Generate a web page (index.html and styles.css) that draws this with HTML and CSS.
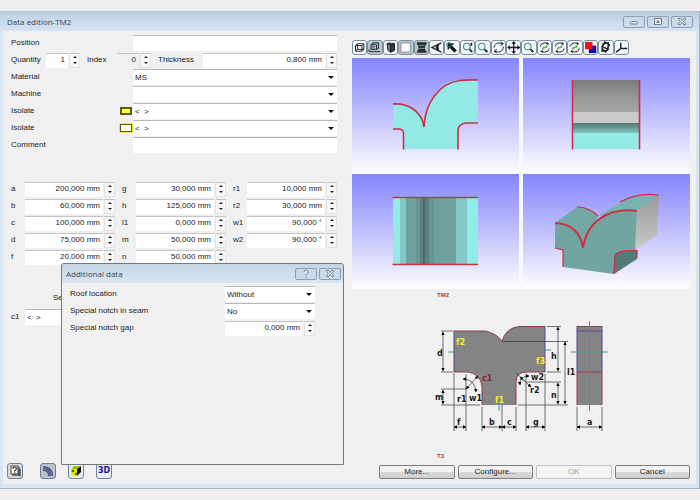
FILE: index.html
```
<!DOCTYPE html>
<html lang="en">
<head>
    <meta charset="UTF-8">
    <meta name="viewport" content="width=device-width, initial-scale=1.0">
    <title>Data edition-TM2</title>
    <link rel="stylesheet" href="styles.css">
</head>
<body>
    <div class="window">
        <div class="titlebar">
            <h1>Data edition-TM2</h1>
            <div class="title-buttons">
                <button aria-label="Minimize"><svg viewBox="0 0 20 10"><rect x="6.500" y="4.500" width="7" height="2.500" rx="1"/></svg></button>
                <button aria-label="Maximize"><svg viewBox="0 0 20 10"><rect x="6.500" y="1.500" width="7" height="6"/><rect x="9" y="4" width="2" height="1.500"/></svg></button>
                <button aria-label="Close"><svg viewBox="0 0 20 10"><path d="M6.500 1.500h2l1.500 2 1.500-2h2v1l-2 2 2 2v1h-2l-1.500-2-1.500 2h-2v-1l2-2-2-2z"/></svg></button>
            </div>
        </div>

        <div class="client">
            <!-- Form side -->
            <div class="form-panel">
                <div class="fields">
                    <div class="row">
                        <label class="name" for="position">Position</label>
                        <input class="text" type="text" id="position">
                    </div>
                    <div class="row">
                        <label class="short" for="quantity">Quantity</label>
                        <div class="spin small"><input type="text" id="quantity" value="1"><span class="arrows"><button class="up" aria-label="Up"></button><button class="down" aria-label="Down"></button></span></div>
                        <label class="index" for="index">Index</label>
                        <div class="spin small gray"><input type="text" id="index" value="0"><span class="arrows"><button class="up" aria-label="Up"></button><button class="down" aria-label="Down"></button></span></div>
                        <label class="thickness" for="thickness">Thickness</label>
                        <div class="spin"><input type="text" id="thickness" value="0,800 mm"><span class="arrows"><button class="up" aria-label="Up"></button><button class="down" aria-label="Down"></button></span></div>
                    </div>
                    <div class="row">
                        <label class="name" for="material">Material</label>
                        <div class="select"><select id="material"><option>MS</option></select></div>
                    </div>
                    <div class="row">
                        <label class="name" for="machine">Machine</label>
                        <div class="select"><select id="machine"><option></option></select></div>
                    </div>
                    <div class="row">
                        <label class="name" for="isolate1">Isolate <span class="swatch"></span></label>
                        <div class="select"><select id="isolate1"><option>&lt;&nbsp; &gt;</option></select></div>
                    </div>
                    <div class="row">
                        <label class="name" for="isolate2">Isolate <span class="swatch outer"></span></label>
                        <div class="select"><select id="isolate2"><option>&lt;&nbsp; &gt;</option></select></div>
                    </div>
                    <div class="row">
                        <label class="name" for="comment">Comment</label>
                        <input class="text" type="text" id="comment">
                    </div>
                </div>

                <!-- Dimensions -->
                <div class="dimensions">
                    <div class="column">
                        <div class="row"><label for="a">a</label><div class="spin"><input type="text" id="a" value="200,000 mm"><span class="arrows"><button class="up" aria-label="Up"></button><button class="down" aria-label="Down"></button></span></div></div>
                        <div class="row"><label for="b">b</label><div class="spin"><input type="text" id="b" value="60,000 mm"><span class="arrows"><button class="up" aria-label="Up"></button><button class="down" aria-label="Down"></button></span></div></div>
                        <div class="row"><label for="c">c</label><div class="spin"><input type="text" id="c" value="100,000 mm"><span class="arrows"><button class="up" aria-label="Up"></button><button class="down" aria-label="Down"></button></span></div></div>
                        <div class="row"><label for="d">d</label><div class="spin"><input type="text" id="d" value="75,000 mm"><span class="arrows"><button class="up" aria-label="Up"></button><button class="down" aria-label="Down"></button></span></div></div>
                        <div class="row"><label for="f">f</label><div class="spin"><input type="text" id="f" value="20,000 mm"><span class="arrows"><button class="up" aria-label="Up"></button><button class="down" aria-label="Down"></button></span></div></div>
                    </div>
                    <div class="column">
                        <div class="row"><label for="g">g</label><div class="spin"><input type="text" id="g" value="30,000 mm"><span class="arrows"><button class="up" aria-label="Up"></button><button class="down" aria-label="Down"></button></span></div></div>
                        <div class="row"><label for="h">h</label><div class="spin"><input type="text" id="h" value="125,000 mm"><span class="arrows"><button class="up" aria-label="Up"></button><button class="down" aria-label="Down"></button></span></div></div>
                        <div class="row"><label for="l1">l1</label><div class="spin"><input type="text" id="l1" value="0,000 mm"><span class="arrows"><button class="up" aria-label="Up"></button><button class="down" aria-label="Down"></button></span></div></div>
                        <div class="row"><label for="m">m</label><div class="spin"><input type="text" id="m" value="50,000 mm"><span class="arrows"><button class="up" aria-label="Up"></button><button class="down" aria-label="Down"></button></span></div></div>
                        <div class="row"><label for="n">n</label><div class="spin"><input type="text" id="n" value="50,000 mm"><span class="arrows"><button class="up" aria-label="Up"></button><button class="down" aria-label="Down"></button></span></div></div>
                    </div>
                    <div class="column">
                        <div class="row"><label for="r1">r1</label><div class="spin"><input type="text" id="r1" value="10,000 mm"><span class="arrows"><button class="up" aria-label="Up"></button><button class="down" aria-label="Down"></button></span></div></div>
                        <div class="row"><label for="r2">r2</label><div class="spin"><input type="text" id="r2" value="30,000 mm"><span class="arrows"><button class="up" aria-label="Up"></button><button class="down" aria-label="Down"></button></span></div></div>
                        <div class="row"><label for="w1">w1</label><div class="spin"><input type="text" id="w1" value="90,000 °"><span class="arrows"><button class="up" aria-label="Up"></button><button class="down" aria-label="Down"></button></span></div></div>
                        <div class="row"><label for="w2">w2</label><div class="spin"><input type="text" id="w2" value="90,000 °"><span class="arrows"><button class="up" aria-label="Up"></button><button class="down" aria-label="Down"></button></span></div></div>
                    </div>
                </div>

                <div class="seam">
                    <div class="seam-title">Se</div>
                    <div class="row">
                        <label for="c1">c1</label>
                        <input class="text" type="text" id="c1" value="&lt;&nbsp; &gt;">
                    </div>
                </div>

                <div class="mode-buttons">
                    <button class="help" aria-label="Help"><svg viewBox="0 0 14 14"><path d="M3 2h7v8H3z" fill="#fffde8" stroke="#444"/><path d="M11 3v8l1 1V5M4 11h7" fill="none" stroke="#222"/><path d="M5 5q0-2 1.700-2T8.300 4.700Q8.300 6 6.700 6.500v1M6.700 8.300v1" fill="none" stroke="#333" stroke-width="1.200"/></svg></button>
                    <button class="elbow" aria-label="Elbow"><svg viewBox="0 0 14 14"><path d="M2 2q10 0 10 10H7Q7 7 2 7z" fill="#4d4d7c"/><path d="M2 3.700q8.300 0 8.500 8M2 5.400q6.500 0 6.700 6.300" fill="none" stroke="#9494b5" stroke-width=".6"/></svg></button>
                    <button aria-label="Solid view"><svg viewBox="0 0 14 14"><path d="M2 5h6v7H2z" fill="#f2f000"/><path d="M2 5l3-3h7L8 5z" fill="#b2c800"/><path d="M8 5l4-3v6l-4 4z" fill="#111"/><path d="M3 6h2v2H3zM6 9h2v2H6zM5 4l3-1" fill="#3e7a22" stroke="#3e7a22" stroke-width=".5"/></svg></button>
                    <button class="three-d">3D</button>
                </div>

                <!-- Additional data dialog -->
                <div class="dialog">
                    <div class="dialog-title">
                        <h2>Additional data</h2>
                        <div class="title-buttons">
                            <button aria-label="Help"><svg viewBox="0 0 20 10"><path d="M8 3q0-2 2-2t2 2q0 1-1 1.500l-1 1V7M10 8v1"/></svg></button>
                            <button aria-label="Close"><svg viewBox="0 0 20 10"><path d="M6.500 1.500h2l1.500 2 1.500-2h2v1l-2 2 2 2v1h-2l-1.500-2-1.500 2h-2v-1l2-2-2-2z"/></svg></button>
                        </div>
                    </div>
                    <div class="dialog-body">
                        <div class="row">
                            <label for="roof">Roof location</label>
                            <div class="select"><select id="roof"><option>Without</option></select></div>
                        </div>
                        <div class="row">
                            <label for="notch">Special notch in seam</label>
                            <div class="select"><select id="notch"><option>No</option></select></div>
                        </div>
                        <div class="row">
                            <label for="gap">Special notch gap</label>
                            <div class="spin"><input type="text" id="gap" value="0,000 mm"><span class="arrows"><button class="up" aria-label="Up"></button><button class="down" aria-label="Down"></button></span></div>
                        </div>
                    </div>
                </div>
            </div>

            <!-- Drawing side -->
            <div class="view-panel">
                <div class="toolbar">
                    <button aria-label="Wireframe"><svg viewBox="0 0 14 14"><path d="M2.500 5h7v6h-7zM4.500 3h7v6h-7zM2.500 5l2-2M9.500 5l2-2M2.500 11l2-2M9.500 11l2-2"/></svg></button>
                    <button class="on" aria-label="Hidden lines"><svg viewBox="0 0 14 14"><path d="M3 4h6v5H3zM4 4l1-2h6v6L9 9M1 11.500h12M1 9v2.500"/><path d="M4 6h3M4 7.500h3" stroke="#555"/></svg></button>
                    <button aria-label="Shaded"><svg viewBox="0 0 14 14"><path d="M3 3l2-1 6 1v7l-4 2-3-2z" fill="#6f7f7f"/><path d="M3 3l4 1v8M7 4l4-1" /><path d="M7 4l4-1v7l-4 2z" fill="#34413f"/></svg></button>
                    <button class="on" aria-label="Single view"><svg viewBox="0 0 14 14"><path d="M2 2h10v10H2z" fill="#fff" stroke="#888"/></svg></button>
                    <button class="on" aria-label="Unfold"><svg viewBox="0 0 14 14"><path d="M2 2h10L10 6H4zM4 6h6v3H4zM2 12l2-3h6l2 3z" fill="#333"/><path d="M4 5h6M4 8h6" stroke="#75aaaa"/></svg></button>
                    <button aria-label="Eye"><svg viewBox="0 0 14 14"><path d="M12 2L2 7l10 5M9 4q-2 3 0 6" stroke-width="1.500"/><path d="M8 4Q5 7 8 10z" fill="#111"/></svg></button>
                    <button aria-label="Select"><svg viewBox="0 0 14 14"><path d="M3 3h6L7 5l5 5-2 2-5-5-2 2z" fill="#111"/><circle cx="4" cy="4" r="2.500" stroke="#398b88"/></svg></button>
                    <button aria-label="Zoom in"><svg viewBox="0 0 14 14"><circle cx="6" cy="6" r="3.700" fill="#e3f7f3" stroke="#2e6f6b"/><path d="M9 9l3 3M11 2v3" stroke-width="1.800"/></svg></button>
                    <button aria-label="Zoom out"><svg viewBox="0 0 14 14"><circle cx="6" cy="6" r="3.700" fill="#e3f7f3" stroke="#2e6f6b"/><path d="M9 9l3 3" stroke-width="2"/></svg></button>
                    <button aria-label="Rotate"><svg viewBox="0 0 14 14"><path d="M2 7q0-4 5-5l4 1M12 6q0 5-5 6l-4-1M9 1l3 2-3 2M5 9l-3 2 3 2"/></svg></button>
                    <button aria-label="Pan"><svg viewBox="0 0 14 14"><path d="M7 2v10M2 7h10" stroke-width="1.400"/><path d="M7 0l2.500 3h-5zM7 14l2.500-3h-5zM0 7l3-2.500v5zM14 7l-3-2.500v5z" fill="#111" stroke="none"/></svg></button>
                    <button aria-label="Zoom window"><svg viewBox="0 0 14 14"><circle cx="6" cy="6" r="3.700" fill="#e3f7f3" stroke="#2e6f6b"/><path d="M9 9l3 3" stroke-width="2"/></svg></button>
                    <button aria-label="Rotate X"><svg viewBox="0 0 14 14"><path d="M2 6q1-4 5-4l4 1M12 8q-1 4-5 4l-4-1M9 1l2 2-2 2M5 9l-2 2 2 2"/><path d="M4 8l6-2" stroke="#53b545" stroke-width="1.600"/></svg></button>
                    <button aria-label="Rotate Y"><svg viewBox="0 0 14 14"><path d="M2 6q1-4 5-4l4 1M12 8q-1 4-5 4l-4-1M9 1l2 2-2 2M5 9l-2 2 2 2"/><path d="M4 8l6-2" stroke="#53b545" stroke-width="1.600"/></svg></button>
                    <button aria-label="Rotate Z"><svg viewBox="0 0 14 14"><path d="M2 6q1-4 5-4l4 1M12 8q-1 4-5 4l-4-1M9 1l2 2-2 2M5 9l-2 2 2 2"/><path d="M4 8l6-2" stroke="#53b545" stroke-width="1.600"/></svg></button>
                    <button aria-label="Colors"><svg viewBox="0 0 14 14"><path d="M5 5h8v8H5z" fill="#0710b5" stroke="none"/><path d="M1 1h8v8H1z" fill="#ee1118" stroke="none"/></svg></button>
                    <button aria-label="Mesh"><svg viewBox="0 0 14 14"><path d="M4 3l6-1-1 8-6 1zM2 6l9 3M6 1l5 3-4 8-4-4z" stroke-width="1.400"/></svg></button>
                    <button aria-label="Axes"><svg viewBox="0 0 14 14"><path d="M6 2v6l-5 4M6 8h7" stroke-width="1.500"/></svg></button>
                </div>

                <div class="views">
                    <!-- front -->
                    <svg class="view" viewBox="0 0 167 115">
                        <path fill="#93e9e5" d="M41 46C57 45 70 54 72 69C73 45 87 22 108 22H126V65H114Q106 65 106 73V91H51V75Q51 71 47 71H41z"/>
                        <path class="edge" d="M41 46C57 45 70 54 72 69C73 45 87 25 108 22.500Q116 21.500 126 22M126 65H114Q106 66 106 73V91.500M51.500 91.500V75Q51 71 47 71H41"/>
                    </svg>
                    <!-- side -->
                    <svg class="view" viewBox="0 0 167 115">
                        <defs>
                            <linearGradient id="side-top" x1="0" y1="0" x2="0" y2="1"><stop offset="0" stop-color="#7b7b7b"/><stop offset=".5" stop-color="#969696"/><stop offset="1" stop-color="#a6a6a6"/></linearGradient>
                            <linearGradient id="side-low" x1="0" y1="0" x2="0" y2="1"><stop offset="0" stop-color="#537674"/><stop offset="1" stop-color="#83c5c2"/></linearGradient>
                        </defs>
                        <path fill="url(#side-top)" d="M50 22h67v32H50z"/>
                        <path fill="#cacaca" d="M50 54h67v11H50z"/>
                        <path fill="url(#side-low)" d="M50 65h67v10H50z"/>
                        <path fill="#93e9e5" d="M50 75h67v16H50z"/>
                        <path class="edge" d="M49.500 22v69.500M116.500 22v69.500"/>
                    </svg>
                    <!-- top -->
                    <svg class="view" viewBox="0 0 167 115">
                        <path fill="#91ebe6" d="M41 23h85v67H41z"/>
                        <path fill="#84c9c8" d="M48 23h67v67H48z"/>
                        <path fill="#6f9f9f" d="M54 23h50v67H54z"/>
                        <path fill="#689494" d="M64 23h18v67H64z"/>
                        <path fill="#5c8080" d="M68 23h9v67h-9z"/>
                        <path fill="#4b6868" d="M71 23h2v67h-2z"/>
                        <path class="edge" d="M40.500 23.500H126M40.500 90.500H126"/>
                    </svg>
                    <!-- isometric -->
                    <svg class="view" viewBox="0 0 167 115">
                        <defs>
                            <linearGradient id="iso-side" x1="0" y1="0" x2="0" y2="1"><stop offset="0" stop-color="#9b9b9b"/><stop offset="1" stop-color="#c9c9c9"/></linearGradient>
                        </defs>
                        <path fill="#72a8a6" d="M32 49L54 33Q66 33 75 42L60 74z"/>
                        <path fill="#78b3b0" d="M75 42L98 28Q116 19 136 21L114 37z"/>
                        <path fill="url(#iso-side)" d="M114 37L136 21 134 61 112 76z"/>
                        <path fill="#557a77" d="M92 83Q94 78 100 77L114 76V85L91 100z"/>
                        <path fill="#71a5a2" d="M32 49Q56 50 60 74C64 47 86 33 114 37L112 76H100Q92 77 92 83L91 100 40 93V76L32 74z"/>
                        <path class="edge thick" d="M32 49Q56 50 60 74C64 47 86 33 114 37"/>
                        <path class="edge thin" d="M54 33Q66 33 75 42M97 28Q115 18 136 21M32 74L40 76V93M114 76V84"/>
                        <path class="edge" d="M114 76.500L100 77Q92 78 92 84L91 100"/>
                    </svg>
                </div>

                <!-- dimension drawing -->
                <svg class="drawing" viewBox="0 0 338 174">
                    <defs>
                        <marker id="arrow" viewBox="0 0 6 6" refX="5.500" refY="3" markerWidth="5" markerHeight="5" orient="auto-start-reverse"><path d="M0 0L6 3 0 6z"/></marker>
                    </defs>
                    <text class="code" x="85" y="8">TM2</text>
                    <text class="code" x="85" y="169">T3</text>
                    <path fill="#848484" d="M102 42H133Q144 44 150 52Q154 39 167 37.500H193V83H175Q164 83 164 93V116H130V97Q128 84 115 83H102z"/>
                    <path class="cut" d="M102 42H133Q144 44 150 52Q154 39 167 37.500H193M193 83H175Q164 83 164 93V116M130 116V97Q128 84 115 83H102"/>
                    <path class="cut blue" d="M102 42V83M193 37.500V83"/>
                    <path fill="#848484" d="M225 37h25v79h-25z"/>
                    <path class="cut" d="M225 83V116M250 83V116M225 37.500h25M225 83h25"/>
                    <path class="cut blue" d="M225 37V83M250 37V83M225 42h25"/>
                    <path class="axis" d="M96 63h6M193 61h6M219 63h37M237.500 32v90M147 116v6"/>
                    <!-- extension lines -->
                    <path class="line" d="M89 42h12M89 83h12M89 100h25M89 116h39M102 84v58M114 85v57M130 118v24M150 116v26M164 118v24M174 85v57M193 85v57M195 37.500h14M150 52.500h66M195 83h14M175 93h34M166 116h50M225 118v24M250 118v24M164 84l10 9"/>
                    <!-- dimension lines -->
                    <path class="line dim" d="M91 43V82"/>
                    <path class="line dim" d="M91 101V115"/>
                    <path class="line dim" d="M206 38V82"/>
                    <path class="line dim" d="M206 94V115"/>
                    <path class="line dim" d="M213 53V115"/>
                    <path class="line dim" d="M102 138H114"/>
                    <path class="line dim" d="M130 138H150"/>
                    <path class="line dim" d="M150 138H164"/>
                    <path class="line dim" d="M174 138H193"/>
                    <path class="line dim" d="M225 138H250"/>
                    <path class="line dim" d="M111 90Q123 90 124 103"/>
                    <path class="line dim" d="M114 100L126 87"/>
                    <path class="line dim" d="M168 96Q167 87 177 87"/>
                    <path class="line dim" d="M179 98L168 88"/>
                    <g class="labels">
                        <text x="85" y="67">d</text>
                        <text x="83" y="111">m</text>
                        <text x="105" y="113">r1</text>
                        <text x="117" y="112">w1</text>
                        <text x="105" y="136">f</text>
                        <text x="137" y="136">b</text>
                        <text x="155" y="136">c</text>
                        <text x="181" y="136">g</text>
                        <text x="235" y="136">a</text>
                        <text x="199" y="70">h</text>
                        <text x="215" y="86">l1</text>
                        <text x="199" y="109">n</text>
                        <text x="179" y="91">w2</text>
                        <text x="178" y="104">r2</text>
                        <text class="red" x="130" y="92">c1</text>
                        <text class="yellow" x="104" y="56">f2</text>
                        <text class="yellow" x="184" y="75">f3</text>
                        <text class="yellow" x="143" y="114">f1</text>
                    </g>
                </svg>

                <div class="actions">
                    <button>More...</button>
                    <button>Configure...</button>
                    <button disabled>OK</button>
                    <button>Cancel</button>
                </div>
            </div>
        </div>
    </div>
</body>
</html>
```
FILE: styles.css
```
* {
    margin: 0;
    padding: 0;
    box-sizing: border-box;
}

body {
    font-family: "Liberation Sans", Arial, sans-serif;
    font-size: 8px;
    line-height: 10px;
    color: #222;
    background-color: #f1efee;
    min-height: 100vh;
    padding: 11px 0;
    display: flex;
}

input,
select,
button {
    font: inherit;
    color: inherit;
    border: none;
    border-radius: 0;
    background: none;
    outline: none;
}

button {
    cursor: pointer;
}

.window {
    flex: 1;
    display: flex;
    flex-direction: column;
    background-color: #d9e7f3;
    border-top: 1px solid #b3c3d3;
    border-bottom: 1px solid #a5b5c3;
    border-right: 1px solid #9cacbc;
    padding: 0 3px 4px;
}

/* Title bars */
.titlebar {
    height: 19px;
    margin: 0 -3px;
    padding: 0 6px 0 7px;
    display: flex;
    align-items: center;
    justify-content: space-between;
    background: linear-gradient(#bccfe1, #d6e4f3);
}

h1,
h2 {
    font-family: "Open Sans", sans-serif;
    font-size: 8px;
    font-weight: normal;
    color: #3c4650;
}

.title-buttons {
    display: flex;
    gap: 2px;
}

.title-buttons button {
    width: 22px;
    height: 12px;
    border: 1px solid #8fa0b4;
    border-radius: 2px;
    background-color: #cbdaea;
}

.title-buttons svg {
    display: block;
    width: 20px;
    height: 10px;
    fill: #e8eef5;
    stroke: #5a6878;
    stroke-width: 0.8;
}

.client {
    flex: 1;
    display: grid;
    grid-template-columns: minmax(0, 349fr) minmax(0, 344fr);
    background-color: #f0f0f0;
}

/* Form side */
.form-panel {
    position: relative;
    display: flex;
    flex-direction: column;
    padding: 4px 15px 5px 4px;
}

.fields,
.dimensions,
.seam {
    padding-left: 4px;
}

.fields,
.column {
    display: flex;
    flex-direction: column;
    gap: 1px;
}

.row {
    display: flex;
    align-items: center;
    height: 16px;
}

.row label {
    flex-shrink: 0;
}

.name {
    width: 122px;
    padding-right: 1px;
    display: flex;
    align-items: center;
    justify-content: space-between;
}

.short {
    width: 35px;
}

.index {
    width: 37px;
    padding-left: 7px;
}

.thickness {
    width: 52px;
    padding-left: 7px;
}

.text {
    flex: 1;
    min-width: 0;
    height: 16px;
    padding: 0 2px;
    background-color: #fff;
    border-top: 1px solid #b9b9b9;
}

.swatch {
    width: 12px;
    height: 8px;
    border: 2px solid #5e5a1c;
    background-color: #ffff3c;
}

.swatch.outer {
    border-width: 1px;
    outline: 1px solid #eeee20;
    background-color: #fffff0;
}

/* Number box with up and down arrows */
.spin {
    flex: 1;
    min-width: 0;
    height: 15px;
    display: flex;
    gap: 1px;
}

.spin.small {
    flex: none;
    width: 34px;
}

.spin input {
    flex: 1;
    min-width: 0;
    padding-right: 3px;
    padding-bottom: 2px;
    text-align: right;
    background-color: #fff;
    border-top: 1px solid #c4c4c4;
}

.spin.gray input {
    background-color: #f0f0f0;
}

.arrows {
    width: 11px;
    display: flex;
    flex-direction: column;
    background-color: #f7f7f7;
    border: 1px solid #e3e3e3;
    border-top-color: #c4c4c4;
}

.arrows button {
    flex: 1;
    display: flex;
    align-items: center;
    justify-content: center;
}

.arrows button::before {
    content: "";
    border: 2px solid transparent;
}

.arrows .up::before {
    border-top-width: 0;
    border-bottom-color: #222;
}

.arrows .down::before {
    border-bottom-width: 0;
    border-top-color: #222;
}

/* Drop-down */
.select {
    flex: 1;
    min-width: 0;
    position: relative;
}

.select select {
    appearance: none;
    display: block;
    width: 100%;
    height: 16px;
    padding: 0 14px 0 2px;
    background-color: #fff;
    border-top: 1px solid #b9b9b9;
}

.select::after {
    content: "";
    position: absolute;
    right: 3px;
    top: 7px;
    border: 3px solid transparent;
    border-top-color: #111;
    border-bottom-width: 0;
    pointer-events: none;
}

.dimensions {
    margin-top: 28px;
    display: grid;
    grid-template-columns: repeat(3, minmax(0, 1fr));
    gap: 7px;
}

.column label,
.seam label {
    width: 14px;
}

.seam {
    width: 100px;
    margin-top: 28px;
}

.seam-title {
    height: 16px;
    padding-left: 42px;
}

.mode-buttons {
    margin-top: auto;
    display: flex;
    gap: 12px;
}

.mode-buttons button {
    width: 16px;
    height: 16px;
    border: 1px solid #6d8499;
    border-radius: 3px;
    background-color: #e6eef4;
}

.mode-buttons .help {
    margin-right: 5px;
    background-color: #d3d8dc;
}

.mode-buttons .elbow {
    background-color: #bcc3cf;
}

.mode-buttons svg {
    display: block;
    width: 14px;
    height: 14px;
}

.mode-buttons .three-d {
    font-family: "DejaVu Sans", sans-serif;
    font-weight: bold;
    text-align: center;
    color: #27149a;
}

/* Additional data */
.dialog {
    position: absolute;
    top: 232px;
    right: 8px;
    bottom: 19px;
    left: 58px;
    background-color: #f0f0f0;
    border: 1px solid #737a82;
    border-radius: 3px 3px 0 0;
}

.dialog-title {
    height: 19px;
    padding: 0 2px 0 4px;
    display: flex;
    align-items: center;
    justify-content: space-between;
    border-radius: 2px 2px 0 0;
    background: linear-gradient(#c3d5e4, #d9e6f2);
}

.dialog-body {
    padding: 3px 28px 0 8px;
    display: flex;
    flex-direction: column;
    gap: 1px;
}

.dialog-body label {
    flex: 1;
}

.dialog-body .select,
.dialog-body .spin {
    flex: none;
    width: 90px;
}

/* Drawing side */
.view-panel {
    display: flex;
    flex-direction: column;
    padding: 9px 6px 5px 0;
}

.toolbar {
    max-width: 277px;
    display: grid;
    grid-template-columns: repeat(18, minmax(0, 1fr));
}

.toolbar button {
    height: 15px;
    border: 1px solid #7790a0;
    border-radius: 3px;
    background-color: #f3f7f9;
}

.toolbar .on {
    background-color: #bcc6cf;
}

.toolbar svg {
    display: block;
    width: 100%;
    height: 13px;
    fill: none;
    stroke: #1b1f22;
}

.views {
    margin-top: 3px;
    display: grid;
    grid-template-columns: 1fr 1fr;
    gap: 1px 4px;
    background-color: #f8f8fd;
}

.view {
    display: block;
    width: 100%;
    background: linear-gradient(#8585ff, #c0c0fd 50%, #fdfdff);
}

.edge {
    fill: none;
    stroke: #cc3044;
    stroke-width: 1.6;
}

.edge.thick {
    stroke-width: 2;
}

.edge.thin {
    stroke-width: 1.2;
}

.drawing {
    display: block;
    width: 100%;
}

.code {
    font-size: 6px;
    font-weight: bold;
    fill: #b03a48;
}

.cut {
    fill: none;
    stroke: #963a4c;
}

.cut.blue {
    stroke: #54489a;
}

.axis {
    fill: none;
    stroke: #3a9a9a;
}

.line {
    fill: none;
    stroke: #333;
    stroke-width: 0.7;
}

.dim {
    marker-start: url(#arrow);
    marker-end: url(#arrow);
}

.labels {
    font-family: "DejaVu Sans", sans-serif;
    font-size: 8px;
    font-weight: bold;
    fill: #1c1c1c;
}

.labels .red {
    fill: #8e1f30;
}

.labels .yellow {
    fill: #f4f01c;
}

.actions {
    margin-top: auto;
    padding-left: 27px;
    display: grid;
    grid-template-columns: repeat(4, 1fr);
    gap: 3px;
}

.actions button {
    height: 14px;
    text-align: center;
    border: 1px solid #7d7d7d;
    border-radius: 2px;
    background: linear-gradient(#f3f3f3 50%, #dadada 50%, #d0d0d0);
}

.actions button:disabled {
    color: #9c9c9c;
    border-color: #c4c4c4;
    background: #f4f4f4;
}
```
